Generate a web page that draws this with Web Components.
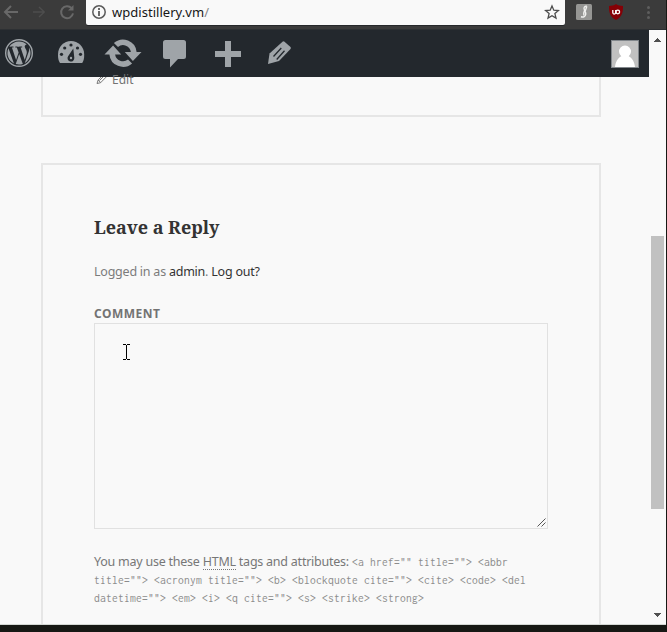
<!DOCTYPE html>
<html lang="en"><head><meta charset="utf-8"><title>WPDistillery</title>
<style>html,body{margin:0;width:667px;height:632px;overflow:hidden;background:#171814}</style></head>
<body><demo-window></demo-window>
<script>
const define = (name, html, init) => customElements.define(name, class extends HTMLElement {
  constructor(){ super(); this.attachShadow({mode:'open'}).innerHTML = html; }
  connectedCallback(){ if (init) init(this); }
});

// Tracks a single line of text so that it fills the width given in pixels.
define('tracked-text', `<style>:host{display:inline-block;white-space:pre}</style><slot></slot>`, el => {
  const w = +el.getAttribute('width'), n = el.textContent.length;
  el.style.letterSpacing = (w - el.getBoundingClientRect().width) / n + 'px';
});

define('address-bar', `<style>
:host{display:flex;height:30px;width:666px;background:#3b3b3b;box-shadow:inset 0 -1px #2d3033}
svg{display:block;flex:none}
.url{width:479px;height:25px;background:#f9f9f9;border-radius:0 0 2px 2px;display:flex;box-shadow:0 1px #26282a;font:13px/24px "Noto Sans",sans-serif;color:#161616}
.txt{width:427px}.slash{color:#858585}
</style>
<svg width="86" height="30" fill="none" stroke="#686868" stroke-width="2"><path d="M18 12H5M11 6l-6 6 6 6"/><path stroke="#4e4e4e" stroke-width="1.3" d="M33 12h11M39 7l5.3 5-5.3 5"/><path d="M71.6 8.2A6 6 0 1 0 73 13.4"/><path d="M73.5 5v5.5H68z" fill="#686868" stroke="none"/></svg>
<div class="url"><svg width="26" height="24" fill="none" stroke="#5a5a5a"><circle cx="13" cy="12" r="6.2" stroke-width="1.5"/><path d="M13 11v5M13 8v2" stroke-width="1.8"/></svg>
<div class="txt"><tracked-text width="97">wpdistillery.vm<span class="slash">/</span></tracked-text></div>
<svg width="26" height="24" viewBox="539 0 26 24"><path d="M552 6l1.8 4.2 4.6.4-3.5 3 1.1 4.5-4-2.4-4 2.4 1.1-4.5-3.5-3 4.6-.4z" fill="none" stroke="#4c4c4c" stroke-width="1.3"/></svg></div>
<svg width="101" height="30" viewBox="565 0 101 30"><rect x="576" y="4" width="16" height="16" rx="1.5" fill="#969694"/><path d="M586.800 6.300c-2-.5-3.300 1.100-2.600 2.900.6 1.600 1.900 3 1.500 5.300-.3 1.700-2 2.900-4.700 2.300M586.800 6.300c-.6 2-1 3-1.500 4.500M584.500 10.500c-.8 1.700-1 3.500-.6 5" fill="none" stroke="#f1f1ef" stroke-width="1.400"/>
<path d="M616 4c2 1.400 4.500 1.900 7 1.900 0 6.500-.6 10.400-7 14.100-6.400-3.700-7-7.600-7-14.100 2.500 0 5-.5 7-1.900z" fill="#850006"/><path d="M612.800 10v2.600a1.400 1.400 0 0 0 2.900 0V10" fill="none" stroke="#fff" stroke-width="1.300"/><circle cx="617.800" cy="12" r="1.800" fill="none" stroke="#fff" stroke-width="1.300"/>
<g fill="#5e5e5e"><circle cx="648.500" cy="7.500" r="1.500"/><circle cx="648.500" cy="12.500" r="1.500"/><circle cx="648.500" cy="17.500" r="1.500"/></g></svg>`);

define('admin-bar', `<style>
:host{display:flex;width:649px;height:47px;background:#23282d;color:#9fa4a8}
svg{display:block;flex:none;fill:currentColor}.grow{flex:1}
</style>
<svg width="45" height="47" viewBox="0 30 45 47"><g transform="translate(5 39) scale(1.1667)"><path d="M21.469 6.825c.84 1.537 1.318 3.3 1.318 5.175 0 3.979-2.156 7.456-5.363 9.325l3.295-9.527c.615-1.54.82-2.771.82-3.864 0-.405-.026-.78-.07-1.11m-7.981.105c.647-.03 1.232-.105 1.232-.105.582-.075.514-.93-.067-.899 0 0-1.755.135-2.880.135-1.064 0-2.850-.15-2.850-.15-.585-.03-.661.855-.075.885 0 0 .54.061 1.125.09l1.680 4.605-2.370 7.080L5.354 6.900c.649-.03 1.234-.1 1.234-.1.585-.075.516-.93-.065-.896 0 0-1.746.138-2.874.138-.2 0-.438-.008-.69-.015C4.911 3.150 8.235 1.215 12 1.215c2.809 0 5.365 1.072 7.286 2.833-.046-.003-.091-.009-.141-.009-1.060 0-1.812.923-1.812 1.914 0 .89.513 1.643 1.060 2.531.411.72.89 1.643.89 2.977 0 .915-.354 1.994-.821 3.479l-1.075 3.585-3.900-11.610zM12 22.784c-1.059 0-2.081-.153-3.048-.437l3.237-9.406 3.315 9.087c.024.053.05.101.078.149-1.120.393-2.325.609-3.582.609M1.211 12c0-1.564.336-3.050.935-4.390L7.290 21.709C3.694 19.960 1.212 16.271 1.211 12" transform="translate(1 1) scale(.9167)"/><circle cx="12" cy="12" r="11.400" fill="none" stroke="currentColor" stroke-width="1.200"/></g></svg>
<svg width="50" height="47" viewBox="45 30 50 47"><path d="M60 63c-1.500-2.200-2-4.500-2-8.500C58 46.500 64 41 71 41s13.200 5.500 13.200 13.500c0 4-.5 6.300-2 8.500z"/><g fill="#23282d"><circle cx="71" cy="45" r="1.600"/><circle cx="64.700" cy="48" r="1.600"/><circle cx="77.500" cy="48" r="1.600"/><circle cx="61.500" cy="54.300" r="1.600"/><circle cx="80.500" cy="54.300" r="1.600"/><path d="M73.300 48.500l1 9.300a3.400 3.400 0 1 1-6.200-1.500z"/></g><circle cx="71" cy="58" r="1.200"/></svg>
<svg width="55" height="47" viewBox="95 30 55 47"><path d="M113.900 43A13.700 13.700 0 0 1 136.600 52H141.500L132.900 61 124.800 52H130.900A8 8 0 0 0 118 46.900z"/><path d="M132.100 63.400A13.700 13.700 0 0 1 109.400 54.400H104.500L113.100 45.400 121.200 54.400H115.100A8 8 0 0 0 128 59.500z"/></svg>
<svg width="50" height="47" viewBox="150 30 50 47"><path d="M165.500 40h18a2.500 2.500 0 0 1 2.500 2.500v14a2.500 2.500 0 0 1-2.500 2.500H178l-8 8.500V59h-4.500a2.500 2.500 0 0 1-2.500-2.500v-14a2.500 2.500 0 0 1 2.500-2.500z"/></svg>
<svg width="55" height="47" viewBox="200 30 55 47"><path d="M225 41h6v10h10v6h-10v10h-6V57h-10v-6h10z"/></svg>
<svg width="50" height="47" viewBox="255 30 50 47"><path d="M282.500 41.700q1-.8 2 0l6 5.300q.8.900 0 2L279 61l-11 3 1.500-10.500z"/><path d="M273.500 56.500l7.800-8.500M276.700 59.500l7.800-8.700" fill="none" stroke="#23282d" stroke-width="1.300"/></svg>
<div class="grow"></div>
<svg width="49" height="47" viewBox="600 30 49 47"><rect x="611.500" y="40.500" width="27" height="27" fill="#c1c1c1" stroke="#82878c"/><path d="M615 67c.5-5 2.600-9 6.300-10.800a6 6 0 1 1 7.400 0C632.400 58 634.500 62 635 67z" fill="#fff"/></svg>`);

define('post-footer', `<style>
:host{display:flex;box-sizing:border-box;width:560px;height:40px;margin-left:41px;border:2px solid #e6e6e6;border-top:0;padding-left:53px;font:12px/18px "Noto Sans",sans-serif;color:#737373}
svg{flex:none;margin-right:1px}.t{margin-top:-6px}
</style><svg width="15" height="10" viewBox="96 77 15 10"><path d="M97 83.500l1.200-3.600 7-7 2.600 2.500-7.200 7.300zM99.500 80.500l6.500-6.500M98.200 80l2.400 2.500" fill="none" stroke="#6b6b6b" stroke-width=".9"/></svg><div class="t"><tracked-text width="21.500">Edit</tracked-text></div>`);

define('allowed-tags', `<style>
:host{display:block;margin-top:24px;font:12.500px/18px "Noto Sans",sans-serif;color:#777}
.row{height:18px;white-space:pre;display:flex}
.m{font:11.500px/18px Inconsolata,"Liberation Mono",monospace;color:#8c8c8c}
abbr{text-decoration:none;background:linear-gradient(90deg,#777 50%,transparent 50%) 0 100%/2px 1px repeat-x}
</style>
<div class="row"><tracked-text width="258"><span>You may use these <abbr title="HyperText Markup Language">HTML</abbr> tags and attributes: </span></tracked-text><tracked-text class="m" width="156">&lt;a href="" title=""&gt; &lt;abbr</tracked-text></div>
<div class="row"><tracked-text class="m" width="432">title=""&gt; &lt;acronym title=""&gt; &lt;b&gt; &lt;blockquote cite=""&gt; &lt;cite&gt; &lt;code&gt; &lt;del</tracked-text></div>
<div class="row"><tracked-text class="m" width="330">datetime=""&gt; &lt;em&gt; &lt;i&gt; &lt;q cite=""&gt; &lt;s&gt; &lt;strike&gt; &lt;strong&gt;</tracked-text></div>`);

define('comment-field', `<style>
:host{display:block;margin-top:24px;font:12px/18px "Noto Sans",sans-serif}
label{display:block;height:18px;font-weight:700;color:#737373}
.box{box-sizing:border-box;width:454px;height:206px;border:1px solid #e1e1e1;position:relative;background:#f9f9f9}
.cur{position:absolute;left:27px;top:18px}.grip{position:absolute;right:0;bottom:0}
</style><label><tracked-text width="66.500">COMMENT</tracked-text></label>
<div class="box"><svg class="cur" width="10" height="20" fill="none" stroke="#000"><path d="M1 2.500h3M5 2.500h3M4.500 3v14M1 17.500h3M5 17.500h3"/></svg>
<svg class="grip" width="11" height="11" fill="none" stroke="#555"><path d="M1.500 9.500l8-8M5.500 9.500l4-4"/></svg></div>`);

define('reply-card', `<style>
:host{display:block;box-sizing:border-box;width:560px;height:480px;margin:46px 0 0 41px;border:2px solid #e6e6e6;padding:50px 0 0 51px;font:12.500px/18px "Noto Sans",sans-serif;color:#7c7c7c}
h2{margin:0;height:24px;font:bold 18px/24px "Noto Serif","Droid Serif","DejaVu Serif Condensed","DejaVu Serif",serif;color:#333}
p{margin:24px 0 0;height:18px}a{color:#333}
</style><h2><tracked-text width="125.500">Leave a Reply</tracked-text></h2>
<p><tracked-text width="165.700">Logged in as <a>admin</a>. <a>Log out?</a></tracked-text></p>
<comment-field></comment-field><allowed-tags></allowed-tags>`);

define('scroll-track', `<style>
:host{display:flex;flex-direction:column;box-sizing:border-box;width:17px;height:594px;align-items:center;background:#f9f9f9;padding:8px 1px 6px 0}
svg{display:block}.thumb{width:13px;height:273px;background:#c1c1c1;margin:193px 0 104px;flex:none}
</style><svg width="8" height="5" shape-rendering="crispEdges"><path d="M4 0l4 4H0z" fill="#505050"/></svg><div class="thumb"></div><svg width="8" height="5" shape-rendering="crispEdges"><path d="M0 0h8L4 4z" fill="#505050"/></svg>`);

define('demo-window', `<style>
:host{display:block;width:667px;height:632px;overflow:hidden;background:#171814}
.view{display:flex;width:666px;height:595px;overflow:hidden;background:#f9f9f9;box-shadow:inset 0 -1px #d4d8d4}
.page{width:649px;height:594px;overflow:hidden;flex:none}
</style><address-bar></address-bar><div class="view"><div class="page"><admin-bar></admin-bar><post-footer></post-footer><reply-card></reply-card></div><scroll-track></scroll-track></div>`);
</script></body></html>
